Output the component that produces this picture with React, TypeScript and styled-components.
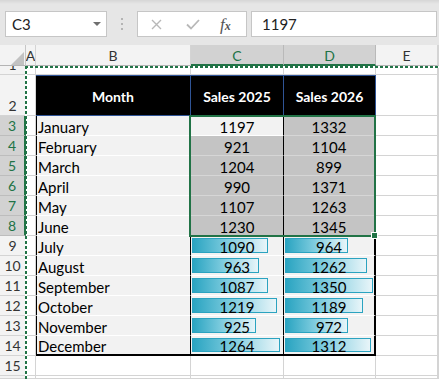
import React from "react";
import styled, { createGlobalStyle, css } from "styled-components";

const GREEN = "#217346";
const GRID = "#d4d4d4";
const BLUE = "#2f5496";

const months = [
  "January", "February", "March", "April", "May", "June",
  "July", "August", "September", "October", "November", "December",
];
const sales2025 = [1197, 921, 1204, 990, 1107, 1230, 1090, 963, 1087, 1219, 925, 1264];
const sales2026 = [1332, 1104, 899, 1371, 1263, 1345, 964, 1262, 1350, 1189, 972, 1312];

const COLS = ["A", "B", "C", "D", "E", ""];
const BAR_MAX = 88;

const GlobalStyle = createGlobalStyle`
  * { box-sizing: border-box; }
  body {
    margin: 0;
    background: #fff;
    font-family: Lato, "Liberation Sans", sans-serif;
  }
`;

const Window = styled.div`
  width: 439px;
  height: 379px;
  overflow: hidden;
  display: flex;
  flex-direction: column;
`;

const Toolbar = styled.div`
  flex: none;
  height: 45px;
  display: flex;
  align-items: flex-start;
  padding: 11px 2px 0 5px;
  background: linear-gradient(#d6d6d6, #e6e6e6 4px);
`;

const Box = styled.div`
  height: 26px;
  display: flex;
  align-items: center;
  background: #fff;
  border: 1px solid #c6c6c6;
  font-size: 15px;
  color: #222;
`;

const NameBox = styled(Box)`
  width: 102px;
  justify-content: space-between;
  padding: 0 5px 0 6px;
`;

const DropArrow = styled.span`
  width: 0;
  height: 0;
  border-left: 4px solid transparent;
  border-right: 4px solid transparent;
  border-top: 4px solid #6f6f6f;
`;

const Grip = styled.div`
  margin-left: 14px;
  height: 26px;
  display: flex;
  flex-direction: column;
  justify-content: center;
  gap: 3px;

  span {
    width: 2px;
    height: 2px;
    background: #b4b4b4;
  }
`;

const ActionBox = styled(Box)`
  width: 110px;
  margin-left: 14px;
  padding-left: 13px;

  svg {
    flex: none;
  }
`;

const Fx = styled.span`
  margin-left: 20px;
  font-family: "Liberation Serif", serif;
  font-style: italic;
  color: #555;
  font-size: 17px;
  line-height: 1;

  sub {
    font-size: 12px;
    vertical-align: baseline;
    font-weight: bold;
  }
`;

const FormulaInput = styled(Box)`
  flex: 1;
  margin-left: 4px;
  padding-left: 10px;
`;

const Sheet = styled.div`
  position: relative;
  flex: 1;
  display: grid;
  grid-template-columns: 26px 10px 155px 93px 92px 62px 1fr;
  grid-template-rows: 21px 9px 41px repeat(13, 20px) 1fr;
  overflow: hidden;
`;

const Corner = styled.div`
  display: flex;
  align-items: flex-end;
  justify-content: flex-end;
  padding-right: 1px;
  background: #f3f3f3;
  border-right: 1px solid #c6c6c6;
  border-bottom: 1px solid #b4b4b4;
`;

const ColHead = styled.div<{ $active?: boolean }>`
  display: flex;
  align-items: center;
  justify-content: center;
  overflow: hidden;
  padding-top: 1px;
  font-size: 14px;
  color: #333;
  background: #f3f3f3;
  border-right: 1px solid ${GRID};
  border-bottom: 1px solid #b4b4b4;

  ${({ $active }) =>
    $active &&
    css`
      background: #d2d2d2;
      color: ${GREEN};
      border-right-color: #b9b9b9;
      border-bottom: 2px solid ${GREEN};
    `}
`;

const RowHead = styled.div<{ $active?: boolean }>`
  display: flex;
  align-items: flex-end;
  justify-content: center;
  overflow: hidden;
  padding-bottom: 1px;
  line-height: 16px;
  font-size: 14px;
  color: #333;
  background: #f3f3f3;
  border-right: 1px solid #c6c6c6;
  border-bottom: 1px solid ${GRID};

  ${({ $active }) =>
    $active &&
    css`
      position: relative;
      z-index: 1;
      background: #d2d2d2;
      color: ${GREEN};
      border-right: 2px solid ${GREEN};
      border-bottom-color: #bdbdbd;
    `}
`;

const Cell = styled.div`
  background: #fff;
  border-right: 1px solid ${GRID};
  border-bottom: 1px solid ${GRID};
`;

const Table = styled.div`
  grid-column: 3 / 6;
  grid-row: 3 / 16;
  margin-left: -1px;
  display: grid;
  grid-template-columns: 156px 93px 92px;
  grid-template-rows: 41px repeat(12, 20px);
  font-size: 15px;
  color: #000;
`;

const HeadCell = styled.div<{ $first?: boolean }>`
  display: flex;
  align-items: center;
  justify-content: center;
  padding-top: 1px;
  background: #000;
  color: #fff;
  font-weight: bold;
  font-size: 14px;
  border-top: 1px solid ${BLUE};
  border-bottom: 1px solid ${BLUE};
  border-right: 1px solid ${BLUE};
  border-left: ${({ $first }) => ($first ? `1px solid ${BLUE}` : "none")};
`;

type Col = "b" | "c" | "d";

const DataCell = styled.div<{ $col: Col; $last?: boolean; $selected?: boolean }>`
  display: grid;
  line-height: 16px;
  background: #f2f2f2;
  border-bottom: 1px solid #fff;
  border-right: 1px solid #000;

  ${({ $col }) =>
    $col === "b" &&
    css`
      border-left: 2px solid #000;
      padding-left: 1px;
    `}
  ${({ $col }) =>
    $col === "d" &&
    css`
      border-right: 2px solid #000;
    `}
  ${({ $last }) =>
    $last &&
    css`
      border-bottom: 2px solid #000;
    `}
  ${({ $selected }) =>
    $selected &&
    css`
      background: #c4c4c4;
      border-bottom-color: #d6d6d6;
    `}
`;

const Label = styled.span<{ $center?: boolean }>`
  grid-area: 1 / 1;
  align-self: end;
  text-align: ${({ $center }) => ($center ? "center" : "left")};
  position: relative;
`;

const Bar = styled.div`
  grid-area: 1 / 1;
  justify-self: start;
  margin: 2px 0 2px 1px;
  border: 1px solid #2ba3c0;
  background: linear-gradient(90deg, #2aa4c1 0%, #7ccbde 45%, #e8f5f9 100%);
`;

const Marquee = styled.div<{ $vertical?: boolean }>`
  position: absolute;
  left: 25px;
  top: 21px;
  ${({ $vertical }) =>
    $vertical
      ? css`
          width: 2px;
          bottom: 0;
          background: repeating-linear-gradient(180deg, ${GREEN} 0 3px, #fff 3px 5px);
        `
      : css`
          height: 2px;
          right: 0;
          background: repeating-linear-gradient(90deg, ${GREEN} 0 3px, #fff 3px 5px);
        `}
`;

const Selection = styled.div`
  position: absolute;
  left: 189px;
  top: 70px;
  width: 187px;
  height: 122px;
  border: 2px solid ${GREEN};
  z-index: 2;
`;

const FillHandle = styled.div`
  position: absolute;
  left: 371px;
  top: 187px;
  width: 7px;
  height: 7px;
  background: ${GREEN};
  border: 1px solid #fff;
  z-index: 3;
`;

const max2025 = Math.max(...sales2025.slice(6));
const max2026 = Math.max(...sales2026.slice(6));

function ValueCell({ value, col, index }: { value: number; col: Col; index: number }) {
  const row = index + 3;
  const selected = row <= 8 && !(row === 3 && col === "c");
  const hasBar = row >= 9;
  const max = col === "c" ? max2025 : max2026;
  return (
    <DataCell $col={col} $last={row === 14} $selected={selected}>
      {hasBar && <Bar style={{ width: Math.round((value / max) * BAR_MAX) }} />}
      <Label $center>{value}</Label>
    </DataCell>
  );
}

export default function App() {
  const cells: React.ReactNode[] = [];
  cells.push(
    <Corner key="corner">
      <svg width="13" height="13" viewBox="0 0 13 13">
        <polygon points="13,0 13,13 0,13" fill="#c2c2c2" />
      </svg>
    </Corner>
  );
  COLS.forEach((c, i) =>
    cells.push(
      <ColHead key={`h${i}`} $active={c === "C" || c === "D"}>
        {c}
      </ColHead>
    )
  );
  for (let r = 1; r <= 16; r++) {
    // row 16 is only a sliver at the bottom edge, its number is out of view
    cells.push(
      <RowHead key={`r${r}`} $active={r >= 3 && r <= 8}>
        {r < 16 ? r : null}
      </RowHead>
    );
    COLS.forEach((_, i) => {
      const inTable = r >= 2 && r <= 14 && i >= 1 && i <= 3;
      if (!inTable) cells.push(<Cell key={`c${r}-${i}`} />);
    });
  }

  return (
    <>
      <GlobalStyle />
      <Window>
        <Toolbar>
          <NameBox>
            <span>C3</span>
            <DropArrow />
          </NameBox>
          <Grip>
            <span />
            <span />
            <span />
          </Grip>
          <ActionBox>
            <svg width="11" height="11" viewBox="0 0 11 11">
              <path d="M1 1 L10 10 M10 1 L1 10" stroke="#b8b8b8" strokeWidth="1.4" fill="none" />
            </svg>
            <svg width="14" height="11" viewBox="0 0 14 11" style={{ marginLeft: 24 }}>
              <path d="M1 5.5 L5 9.5 L13 1" stroke="#b8b8b8" strokeWidth="1.8" fill="none" />
            </svg>
            <Fx>
              f<sub>x</sub>
            </Fx>
          </ActionBox>
          <FormulaInput>1197</FormulaInput>
        </Toolbar>
        <Sheet>
          <Table>
            <HeadCell $first>Month</HeadCell>
            <HeadCell>Sales 2025</HeadCell>
            <HeadCell>Sales 2026</HeadCell>
            {months.map((m, i) => (
              <React.Fragment key={m}>
                <DataCell $col="b" $last={i === 11}>
                  <Label>{m}</Label>
                </DataCell>
                <ValueCell value={sales2025[i]} col="c" index={i} />
                <ValueCell value={sales2026[i]} col="d" index={i} />
              </React.Fragment>
            ))}
          </Table>
          {cells}
          <Marquee />
          <Marquee $vertical />
          <Selection />
          <FillHandle />
        </Sheet>
      </Window>
    </>
  );
}
